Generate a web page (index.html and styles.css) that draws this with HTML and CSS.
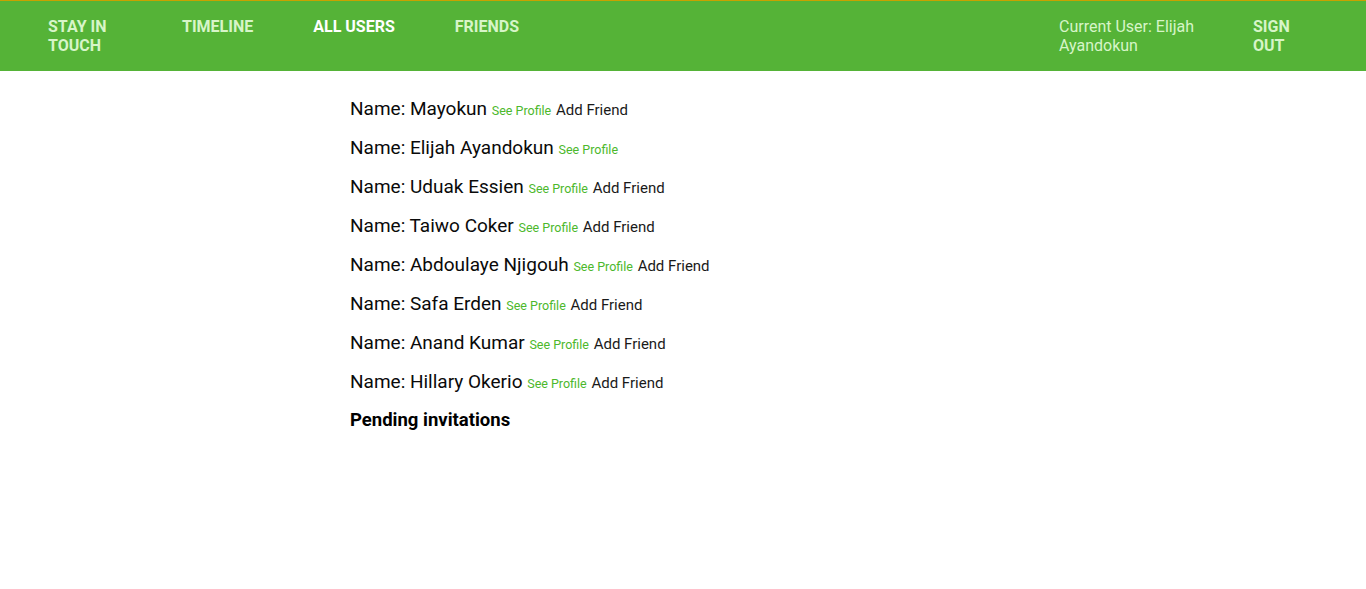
FILE: index.html
```html
<!DOCTYPE html>
<html lang="en">
<head>
<meta charset="utf-8">
<title>Stay in Touch - All Users</title>
<link rel="stylesheet" href="styles.css">
</head>
<body>
<header class="topbar">
  <nav class="nav-left">
    <a class="nav-link brand" href="#">STAY IN TOUCH</a>
    <a class="nav-link timeline" href="#">TIMELINE</a>
    <a class="nav-link allusers active" href="#">ALL USERS</a>
    <a class="nav-link friends" href="#">FRIENDS</a>
  </nav>
  <div class="nav-right">
    <span class="current-user">Current User: Elijah Ayandokun</span>
    <a class="nav-link signout" href="#">SIGN OUT</a>
  </div>
</header>
<main class="content">
  <ul class="users">
    <li class="user"><span class="name">Name: Mayokun</span> <a class="profile" href="#">See Profile</a> <a class="add" href="#">Add Friend</a></li>
    <li class="user"><span class="name">Name: Elijah Ayandokun</span> <a class="profile" href="#">See Profile</a></li>
    <li class="user"><span class="name">Name: Uduak Essien</span> <a class="profile" href="#">See Profile</a> <a class="add" href="#">Add Friend</a></li>
    <li class="user"><span class="name">Name: Taiwo Coker</span> <a class="profile" href="#">See Profile</a> <a class="add" href="#">Add Friend</a></li>
    <li class="user"><span class="name">Name: Abdoulaye Njigouh</span> <a class="profile" href="#">See Profile</a> <a class="add" href="#">Add Friend</a></li>
    <li class="user"><span class="name">Name: Safa Erden</span> <a class="profile" href="#">See Profile</a> <a class="add" href="#">Add Friend</a></li>
    <li class="user"><span class="name">Name: Anand Kumar</span> <a class="profile" href="#">See Profile</a> <a class="add" href="#">Add Friend</a></li>
    <li class="user"><span class="name">Name: Hillary Okerio</span> <a class="profile" href="#">See Profile</a> <a class="add" href="#">Add Friend</a></li>
  </ul>
  <h3 class="pending">Pending invitations</h3>
</main>
</body>
</html>
```

FILE: styles.css
```css
* { box-sizing: border-box; }

body {
  margin: 0;
  font-family: Roboto, "Noto Sans", Arial, sans-serif;
  color: #111;
  background: #fff;
}

a { text-decoration: none; }

.topbar {
  display: flex;
  justify-content: space-between;
  align-items: flex-start;
  height: 71px;
  background: #55b337;
  border-top: 1px solid #c9a100;
  padding: 16px 0 0 48px;
  font-size: 16px;
  line-height: 19px;
}

.nav-left, .nav-right {
  display: flex;
  align-items: flex-start;
}

.nav-link {
  color: #d7f5c8;
  font-weight: 700;
}

.nav-link.active { color: #ffffff; }

.brand { width: 70px; margin-right: 64px; }
.timeline { margin-right: 60px; }
.allusers { margin-right: 60px; }

.current-user {
  color: #d7f5c8;
  width: 150px;
  margin-right: 44px;
}

.signout {
  width: 50px;
  margin-right: 63px;
}

.content {
  width: 666px;
  margin: 0 auto;
  padding-top: 27px;
}

.users {
  list-style: none;
  margin: 0;
  padding: 0;
  display: flex;
  flex-direction: column;
  gap: 18px;
}

.user {
  font-size: 19px;
  line-height: 21px;
  height: 21px;
  white-space: nowrap;
}

.name { color: #0a0a0a; }

.profile {
  color: #4cb82c;
  font-size: 12.5px;
  line-height: 1;
}

.add {
  color: #1a1a1a;
  font-size: 15px;
  line-height: 1;
}

.pending {
  margin: 18px 0 0;
  font-size: 18.5px;
  line-height: 21px;
  font-weight: 700;
  color: #000;
}
```
